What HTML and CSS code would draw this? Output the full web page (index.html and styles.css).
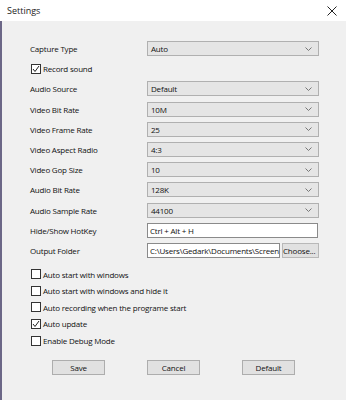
FILE: index.html
```html
<!DOCTYPE html>
<html lang="en">
<head>
  <meta charset="UTF-8">
  <title>Settings</title>
  <link rel="stylesheet" href="styles.css">
</head>
<body>

  <div class="window">
    <div class="titlebar">
      <span class="title">Settings</span>
      <svg class="close" width="10" height="10" viewBox="0 0 10 10"><path d="M0.5 0.5L9.5 9.5M9.5 0.5L0.5 9.5" stroke="#222" stroke-width="1"/></svg>
    </div>

    <div class="content">
      <div class="form">
        <label class="lbl">Capture Type</label>
        <div class="select"><span>Auto</span><svg width="7" height="4" viewBox="0 0 7 4"><path d="M0.5 0.5L3.5 3.5L6.5 0.5" stroke="#777" fill="none"/></svg></div>

        <div class="check wide"><span class="box on"><svg width="8" height="8" viewBox="0 0 8 8"><path d="M1 4L3 6.5L7 1" stroke="#222" stroke-width="1" fill="none"/></svg></span>Record sound</div>

        <label class="lbl">Audio Source</label>
        <div class="select"><span>Default</span><svg width="7" height="4" viewBox="0 0 7 4"><path d="M0.5 0.5L3.5 3.5L6.5 0.5" stroke="#777" fill="none"/></svg></div>

        <label class="lbl">Video Bit Rate</label>
        <div class="select"><span>10M</span><svg width="7" height="4" viewBox="0 0 7 4"><path d="M0.5 0.5L3.5 3.5L6.5 0.5" stroke="#777" fill="none"/></svg></div>

        <label class="lbl">Video Frame Rate</label>
        <div class="select"><span>25</span><svg width="7" height="4" viewBox="0 0 7 4"><path d="M0.5 0.5L3.5 3.5L6.5 0.5" stroke="#777" fill="none"/></svg></div>

        <label class="lbl">Video Aspect Radio</label>
        <div class="select"><span>4:3</span><svg width="7" height="4" viewBox="0 0 7 4"><path d="M0.5 0.5L3.5 3.5L6.5 0.5" stroke="#777" fill="none"/></svg></div>

        <label class="lbl">Video Gop Size</label>
        <div class="select"><span>10</span><svg width="7" height="4" viewBox="0 0 7 4"><path d="M0.5 0.5L3.5 3.5L6.5 0.5" stroke="#777" fill="none"/></svg></div>

        <label class="lbl">Audio Bit Rate</label>
        <div class="select"><span>128K</span><svg width="7" height="4" viewBox="0 0 7 4"><path d="M0.5 0.5L3.5 3.5L6.5 0.5" stroke="#777" fill="none"/></svg></div>

        <label class="lbl">Audio Sample Rate</label>
        <div class="select"><span>44100</span><svg width="7" height="4" viewBox="0 0 7 4"><path d="M0.5 0.5L3.5 3.5L6.5 0.5" stroke="#777" fill="none"/></svg></div>

        <label class="lbl">Hide/Show HotKey</label>
        <div class="textbox">Ctrl + Alt + H</div>

        <label class="lbl">Output Folder</label>
        <div class="folder">
          <div class="textbox path">C:\Users\Gedark\Documents\Screen</div>
          <div class="choose">Choose...</div>
        </div>
      </div>

      <div class="options">
        <div class="check"><span class="box"></span>Auto start with windows</div>
        <div class="check"><span class="box"></span>Auto start with windows and hide it</div>
        <div class="check"><span class="box"></span>Auto recording when the programe start</div>
        <div class="check"><span class="box on"><svg width="8" height="8" viewBox="0 0 8 8"><path d="M1 4L3 6.5L7 1" stroke="#222" stroke-width="1" fill="none"/></svg></span>Auto update</div>
        <div class="check"><span class="box"></span>Enable Debug Mode</div>
      </div>

      <div class="buttons">
        <div class="btn">Save</div>
        <div class="btn">Cancel</div>
        <div class="btn">Default</div>
      </div>
    </div>
  </div>

</body>
</html>
```

FILE: styles.css
```css
body {
  margin: 0;
  font-family: "Open Sans", "Noto Sans", sans-serif;
  font-size: 8px;
  letter-spacing: -0.2px;
  color: #111;
  background: #f0f0f0;
}

.window {
  width: 346px;
  height: 400px;
  overflow: hidden;
}

.titlebar {
  height: 21px;
  background: #fff;
  display: flex;
  align-items: center;
  justify-content: space-between;
  padding: 0 9px 0 7px;
  box-sizing: border-box;
}

.title {
  font-size: 9px;
  letter-spacing: 0;
  color: #222;
}

.content {
  height: 379px;
  background: #f0f0f0;
  border-left: 2px solid #6c6787;
  box-sizing: border-box;
  padding: 20px 0 0 28px;
}

/* Settings rows */
.form {
  display: grid;
  grid-template-columns: 117px 172px;
  grid-auto-rows: 15px;
  row-gap: 5.2px;
  align-items: center;
}

.lbl {
  line-height: 15px;
}

.select {
  height: 15px;
  box-sizing: border-box;
  border: 1px solid #b0b0b0;
  background: #e5e5e5;
  display: flex;
  align-items: center;
  justify-content: space-between;
  padding: 0 6px 0 3px;
}

.textbox {
  height: 15px;
  box-sizing: border-box;
  border: 1px solid #8a8a8a;
  background: #fff;
  padding: 0 2px;
  line-height: 13px;
  white-space: nowrap;
  overflow: hidden;
  width: 171px;
}

.folder {
  display: flex;
  gap: 2px;
}

.textbox.path {
  width: 133px;
}

.choose {
  width: 37px;
  height: 15px;
  box-sizing: border-box;
  border: 1px solid #b8b8b8;
  background: #e1e1e1;
  line-height: 13px;
  white-space: nowrap;
  overflow: hidden;
}

/* Checkboxes */
.check {
  display: flex;
  align-items: center;
  gap: 2px;
  height: 15px;
  padding-left: 1px;
}

.check.wide {
  grid-column: 1 / 3;
}

.box {
  width: 10px;
  height: 10px;
  box-sizing: border-box;
  border: 1px solid #333;
  background: #fff;
  display: flex;
  align-items: center;
  justify-content: center;
}

.options {
  margin-top: 8px;
  display: flex;
  flex-direction: column;
}

.options .check {
  height: 16.6px;
}

/* Bottom buttons */
.buttons {
  display: flex;
  gap: 42px;
  padding-left: 22px;
  margin-top: 11px;
}

.btn {
  width: 53px;
  height: 15px;
  box-sizing: border-box;
  border: 1px solid #adadad;
  background: #e1e1e1;
  text-align: center;
  line-height: 13px;
}
```
